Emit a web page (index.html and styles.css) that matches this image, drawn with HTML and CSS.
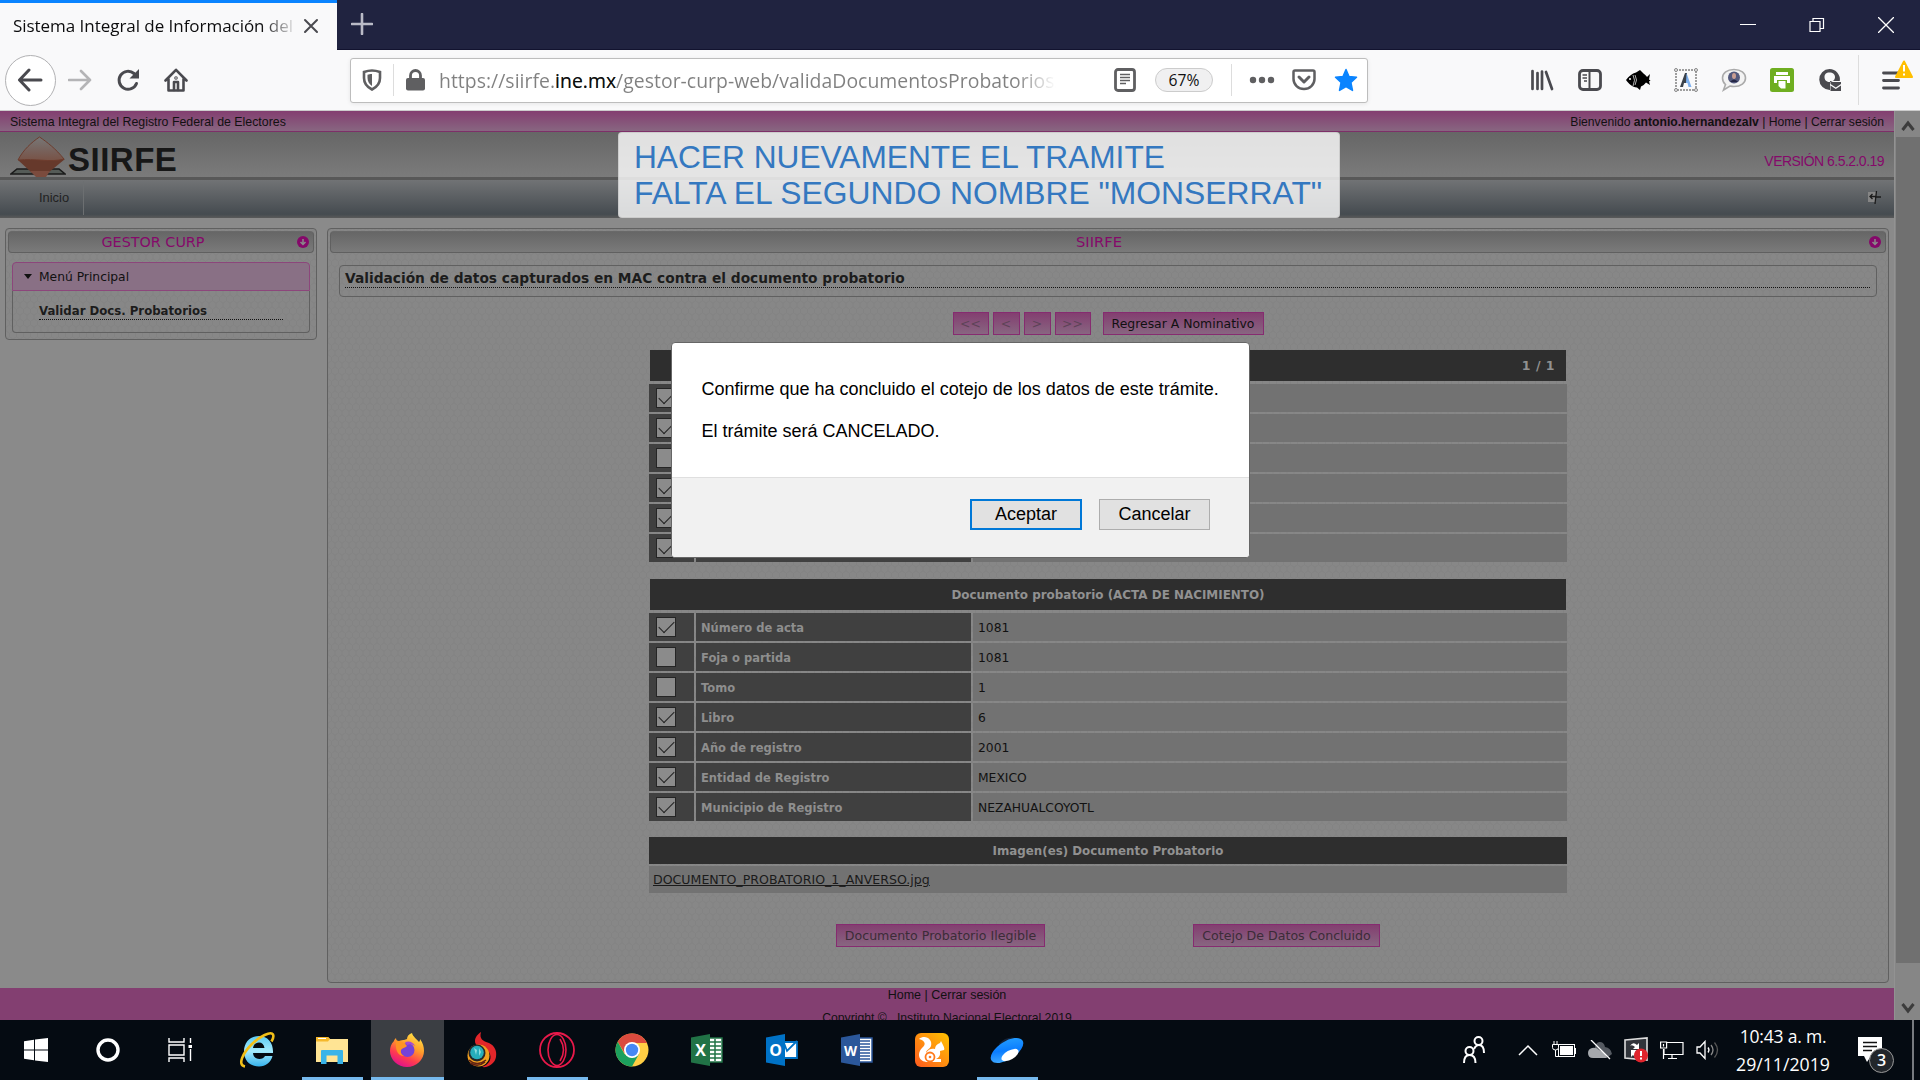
FILE: index.html
```html
<!DOCTYPE html>
<html lang="es">
<head>
<meta charset="utf-8">
<title>Sistema Integral de Información del Registro Federal de Electores</title>
<link rel="stylesheet" href="styles.css">
</head>
<body>
<header class="tabbar">
  <div class="tab"><span class="tab-title">Sistema Integral de Información del</span>
    <svg width="16" height="16" viewBox="0 0 16 16"><path d="M2 2l12 12M14 2L2 14" stroke="#4a4a4f" stroke-width="2" stroke-linecap="round"/></svg></div>
  <svg class="newtab" width="22" height="22" viewBox="0 0 22 22"><path d="M11 1v20M1 11h20" stroke="#b9bac6" stroke-width="2.6" stroke-linecap="round"/></svg>
  <div class="winbtns">
    <svg width="16" height="16" viewBox="0 0 16 16"><path d="M0 7.5h16" stroke="#fff"/></svg>
    <svg width="16" height="16" viewBox="0 0 16 16" fill="none" stroke="#fff" stroke-width="1.2"><path d="M1 4.5h10v10H1zM4 4.5v-3h10.500v10H11"/></svg>
    <svg width="16" height="16" viewBox="0 0 16 16"><path d="M0 0l16 16M16 0L0 16" stroke="#fff" stroke-width="1.3"/></svg>
  </div>
</header>

<nav class="toolbar">
  <div class="navbtns">
    <span class="back"><svg width="26" height="24" viewBox="0 0 26 24"><path d="M24 12H3M12 2L2.500 12 12 22" fill="none" stroke="#4a4a4f" stroke-width="3" stroke-linecap="round" stroke-linejoin="round"/></svg></span>
    <span class="slot"><svg width="24" height="22" viewBox="0 0 24 22"><path d="M1 11h21M13 2l9 9-9 9" fill="none" stroke="#b4b4b6" stroke-width="2.600" stroke-linecap="round" stroke-linejoin="round"/></svg></span>
    <span class="slot"><svg width="24" height="24" viewBox="0 0 24 24"><path d="M20.500 15.500A9 9 0 1 1 18 5.500" fill="none" stroke="#4a4a4f" stroke-width="3" stroke-linecap="round"/><path d="M23 1v9.500h-9.500z" fill="#4a4a4f"/></svg></span>
    <span class="slot"><svg width="24" height="24" viewBox="0 0 24 24" fill="none" stroke="#4a4a4f" stroke-width="2.600" stroke-linejoin="round" stroke-linecap="round"><path d="M1.500 12.500L12 1.800l10.500 10.700M4.500 11v11.500h15V11"/><path d="M10 22v-8h4v8"/><circle cx="12" cy="10" r=".5"/></svg></span>
  </div>
  <div class="urlbar">
    <svg class="shield" width="20" height="22" viewBox="0 0 20 22"><path d="M10 1.500c3 0 5.500.6 8 1.500v6c0 5-3 9-8 11.500C5 18 2 14 2 9V3c2.500-.9 5-1.500 8-1.500z" fill="none" stroke="#5f5f61" stroke-width="2.600"/><path d="M10 5c-2 0-3 .3-4.500.7V9c0 3.500 2 6.500 4.500 8z" fill="#5f5f61"/></svg>
    <i class="vsep"></i>
    <svg class="lock" width="19" height="22" viewBox="0 0 19 22"><rect x="0" y="9" width="19" height="12.500" rx="2" fill="#5f5f61"/><path d="M4.500 10V6.500a5 5 0 0 1 10 0V10" fill="none" stroke="#5f5f61" stroke-width="2.800"/></svg>
    <span class="url">https://siirfe.<b>ine.mx</b>/gestor-curp-web/validaDocumentosProbatorios/</span>
    <svg class="reader" width="22" height="24" viewBox="0 0 22 24"><rect x="1.500" y="1.500" width="19" height="21" rx="2.500" fill="none" stroke="#5f5f61" stroke-width="2.800"/><path d="M6 6.500h10M6 9.500h10M6 12.500h10M6 15.500h6" stroke="#5f5f61" stroke-width="1.400"/></svg>
    <span class="zoom">67%</span>
    <i class="vsep vsep2"></i>
    <svg class="dots" width="26" height="8" viewBox="0 0 26 8" fill="#5f5f61"><circle cx="4" cy="4" r="3.200"/><circle cx="13" cy="4" r="3.200"/><circle cx="22" cy="4" r="3.200"/></svg>
    <svg class="pocket" width="24" height="22" viewBox="0 0 24 22" fill="none" stroke="#5f5f61" stroke-linecap="round" stroke-linejoin="round"><path d="M3 1.500h18q1.500 0 1.500 1.500v7a10.500 10 0 0 1-21 0V3q0-1.500 1.500-1.500z" stroke-width="2.500"/><path d="M7 8l5 5 5-5" stroke-width="3"/></svg>
    <svg class="star" width="24" height="24" viewBox="0 0 24 24"><path d="M12 1.500l3 7 7.500.8-5.600 5.100 1.600 8L12 18.500l-6.500 3.900 1.600-8L1.500 9.300 9 8.500z" fill="#0a84ff" stroke="#0a84ff" stroke-width="1.500" stroke-linejoin="round"/></svg>
  </div>
  <div class="exts">
    <span class="slot"><svg width="24" height="22" viewBox="0 0 24 22" stroke="#4a4a4f" stroke-width="2.700" stroke-linecap="round"><path d="M2.500 2v18M7.500 4v16M12 2.500V20M16 3l6 17"/></svg></span>
    <span class="slot"><svg width="24" height="22" viewBox="0 0 24 22" fill="none" stroke="#4a4a4f"><rect x="1.500" y="1.500" width="21" height="19" rx="3.500" stroke-width="2.800"/><path d="M11.500 2v18" stroke-width="2"/><path d="M4.500 6H9M4.500 9H9M6 12h3" stroke-width="1.400"/></svg></span>
    <span class="slot"><svg width="26" height="20" viewBox="0 0 26 20"><path d="M1 10C4 6 7 3.500 11 2.500L15 0l4 4c1 .5 2 1.700 3 3l3-3-1 5.500 1.500 1-1.500 1L25 15l-4-2.500c-1.500 2-3 3-5 4L15 20l-3-2.500C7 17 4 14 1 10z" fill="#000"/><circle cx="5" cy="9" r="1" fill="#fff"/><path d="M8 5q3 5 0 11M10 5q3 5 0 10" fill="none" stroke="#ddd" stroke-width=".8"/></svg></span>
    <span class="slot"><svg width="24" height="24" viewBox="0 0 24 24"><rect x="2" y="2" width="20" height="20" fill="none" stroke="#808080" stroke-width="1.500" stroke-dasharray="2 1"/><g fill="#eee" stroke="#888"><circle cx="2" cy="2" r="1.500"/><circle cx="22" cy="2" r="1.500"/><circle cx="2" cy="22" r="1.500"/><circle cx="22" cy="22" r="1.500"/></g><path d="M6 19L11 5h2v10h-3l-1 4z" fill="#3a414a"/><path d="M12.500 5l5 14h-3l-1-4h-1.500z" fill="#7db0ee"/></svg></span>
    <span class="slot"><svg width="26" height="24" viewBox="0 0 26 24"><path d="M13 1.500c7 0 11.500 3.500 11.500 8.500S20 18.500 13 18.500q-2 0-4-.5L2.500 22l2-5.500Q1.500 14 1.500 10C1.500 5 6 1.500 13 1.500z" fill="#f3f3f3" stroke="#aaa" stroke-width="1.600"/><ellipse cx="13" cy="9.500" rx="6" ry="6" fill="#52587c"/><ellipse cx="13" cy="8" rx="2" ry="3" fill="#c89d92"/><path d="M9 14q4-5 8 0z" fill="#252746"/></svg></span>
    <span class="slot"><svg width="24" height="24" viewBox="0 0 24 24"><rect width="24" height="24" rx="2.500" fill="#6fae20"/><path d="M6 4h12v3H6zM4 8h16v7h-3v-3H7v3H4z" fill="#fff"/><path d="M8.500 13h7v7.500H11L8.500 18z" fill="#fff"/></svg></span>
    <span class="slot"><svg width="24" height="24" viewBox="0 0 24 24"><path fill-rule="evenodd" d="M11.500 1a10.500 10.500 0 0 1 10.300 12H12v9A10.500 10.500 0 0 1 11.500 1zM11.500 4.500c-3.500 0-5 2-5 4.500s1.500 5 5 5 5.500-2.500 5.500-5-2-4.500-5.500-4.500z" fill="#4a4a4f"/><path d="M12.500 14H23v2l-5.200 3.500L12.500 16zM12.500 17.500l5.300 3.500 5.200-3.500V23H12.500z" fill="#4a4a4f"/></svg></span>
    <i class="tsep"></i>
    <span class="menu"><svg width="32" height="32" viewBox="0 0 32 32"><path d="M2.500 13h16M2.500 20.500h15M2.500 28h15" stroke="#4a4a4f" stroke-width="2.800" stroke-linecap="round"/><path d="M23 1.500L31 17H15z" fill="#ffbf00" stroke="#ffbf00" stroke-width="2" stroke-linejoin="round"/><path d="M23 5v6.500M23 13.500v2" stroke="#fff" stroke-width="2"/></svg></span>
  </div>
</nav>

<main class="viewport">
  <div class="page">
    <div class="welcome"><span class="sysname">Sistema Integral del Registro Federal de Electores</span><span>Bienvenido <b>antonio.hernandezalv</b> | Home | Cerrar sesión</span></div>
    <div class="brand">
      <div class="logo">
        <svg width="56" height="42" viewBox="0 0 56 42"><defs><linearGradient id="kite" x1="0" y1="0" x2="0" y2="1"><stop offset="0" stop-color="#777"/><stop offset="1" stop-color="#785246"/></linearGradient></defs><path d="M7 33h42l6 5H1z" fill="#555b57" stroke="#1b1b1b" stroke-width="1.500"/><path d="M8 24l47-1-17 14H22z" fill="#66392b"/><path d="M29.500 1C37 6 46 13 54 23 40 27 25 22 8 24 13 14 22 6 29.500 1z" fill="url(#kite)" stroke="#6d3c2d"/><path d="M20 35h20l-4 6H26z" fill="#7b4b3d"/></svg>
        <span class="logo-text">SIIRFE</span>
      </div>
      <span class="version">VERSIÓN 6.5.2.0.19</span>
    </div>
    <div class="menubar"><span class="inicio">Inicio</span>
      <svg width="16" height="16" viewBox="0 0 16 16"><path d="M1 2h8v10H1z" fill="#858585"/><path d="M3 6.500h6M5.500 4L3 6.500 5.500 9M9.500 1L8 14M8 7h6" stroke="#1b1b1b" stroke-width="1.300" fill="none"/></svg></div>
    <div class="columns">
      <aside class="panel side">
        <div class="phead"><span class="ptitle">GESTOR CURP</span><svg width="12" height="12" viewBox="0 0 12 12"><circle cx="6" cy="6" r="6" fill="#85096a"/><path d="M6 3v5M3.500 6L6 8.500 8.500 6" stroke="#8a8a8a" stroke-width="1.500" fill="none"/></svg></div>
        <div class="accordion">
          <div class="acc-head"><svg width="8" height="5" viewBox="0 0 8 5"><path d="M0 0h8L4 5z" fill="#111"/></svg><span>Menú Principal</span></div>
          <div class="acc-body"><span>Validar Docs. Probatorios</span></div>
        </div>
      </aside>
      <section class="panel content">
        <div class="phead"><span class="ptitle main-title">SIIRFE</span><svg width="12" height="12" viewBox="0 0 12 12"><circle cx="6" cy="6" r="6" fill="#85096a"/><path d="M6 3v5M3.500 6L6 8.500 8.500 6" stroke="#8a8a8a" stroke-width="1.500" fill="none"/></svg></div>
        <div class="heading"><span>Validación de datos capturados en MAC contra el documento probatorio</span></div>
        <div class="pager"><span class="btn off w36">&lt;&lt;</span><span class="btn off w27">&lt;</span><span class="btn off w27">&gt;</span><span class="btn off w36">&gt;&gt;</span><span class="btn back-nom">Regresar A Nominativo</span></div>
        <div class="table first">
          <div class="thead right">1 / 1</div>
          <div class="row"><span class="ck"><i class="box on"></i></span><span class="lb"></span><span class="vl"></span></div>
          <div class="row"><span class="ck"><i class="box on"></i></span><span class="lb"></span><span class="vl"></span></div>
          <div class="row"><span class="ck"><i class="box"></i></span><span class="lb"></span><span class="vl"></span></div>
          <div class="row"><span class="ck"><i class="box on"></i></span><span class="lb"></span><span class="vl"></span></div>
          <div class="row"><span class="ck"><i class="box on"></i></span><span class="lb"></span><span class="vl"></span></div>
          <div class="row"><span class="ck"><i class="box on"></i></span><span class="lb"></span><span class="vl"></span></div>
        </div>
        <div class="table second">
          <div class="thead">Documento probatorio (ACTA DE NACIMIENTO)</div>
          <div class="row"><span class="ck"><i class="box on"></i></span><span class="lb">Número de acta</span><span class="vl">1081</span></div>
          <div class="row"><span class="ck"><i class="box"></i></span><span class="lb">Foja o partida</span><span class="vl">1081</span></div>
          <div class="row"><span class="ck"><i class="box"></i></span><span class="lb">Tomo</span><span class="vl">1</span></div>
          <div class="row"><span class="ck"><i class="box on"></i></span><span class="lb">Libro</span><span class="vl">6</span></div>
          <div class="row"><span class="ck"><i class="box on"></i></span><span class="lb">Año de registro</span><span class="vl">2001</span></div>
          <div class="row"><span class="ck"><i class="box on"></i></span><span class="lb">Entidad de Registro</span><span class="vl">MEXICO</span></div>
          <div class="row"><span class="ck"><i class="box on"></i></span><span class="lb">Municipio de Registro</span><span class="vl">NEZAHUALCOYOTL</span></div>
        </div>
        <div class="table third">
          <div class="thead images">Imagen(es) Documento Probatorio</div>
          <div class="file"><a>DOCUMENTO_PROBATORIO_1_ANVERSO.jpg</a></div>
        </div>
        <div class="actions"><span class="btn off wide">Documento Probatorio Ilegible</span><span class="btn off done">Cotejo De Datos Concluido</span></div>
      </section>
    </div>
    <footer class="foot"><div class="foot-links">Home | Cerrar sesión</div><div class="copy">Copyright © &nbsp; Instituto Nacional Electoral 2019</div></footer>
  </div>
  <div class="scroll">
    <svg width="14" height="12" viewBox="0 0 14 12"><path d="M1.500 10L7 3l5.500 7" fill="none" stroke="#3c3c3c" stroke-width="3"/></svg>
    <div class="thumb"></div>
    <svg class="down" width="14" height="12" viewBox="0 0 14 12"><path d="M1.500 2L7 9l5.500-7" fill="none" stroke="#3c3c3c" stroke-width="3"/></svg>
  </div>
</main>

<div class="note"><div class="n1">HACER NUEVAMENTE EL TRAMITE</div><div>FALTA EL SEGUNDO NOMBRE "MONSERRAT"</div></div>

<div class="dialog">
  <div class="msg"><p>Confirme que ha concluido el cotejo de los datos de este trámite.</p><p>El trámite será CANCELADO.</p></div>
  <div class="dfoot"><span class="dbtn primary">Aceptar</span><span class="dbtn">Cancelar</span></div>
</div>

<footer class="taskbar">
  <div class="sys">
    <span><svg width="24" height="24" viewBox="0 0 24 24" fill="#fff"><path d="M0 3.300l10-1.500v9.700H0zM11 1.600L24 0v11.500H11zM0 12.500h10v9.700L0 20.700zM11 12.500h13V24l-13-1.600z"/></svg></span>
    <span><svg width="24" height="24" viewBox="0 0 24 24"><circle cx="12" cy="12" r="10" fill="none" stroke="#fff" stroke-width="3.400"/></svg></span>
    <span><svg width="24" height="24" viewBox="0 0 24 24" fill="none" stroke="#fff" stroke-width="1.400"><path d="M1 0v4h15V0M1 24v-4h15v4M1 7h15v10H1zM22.500 0v5M22.500 11v12"/><path d="M20.500 7h4v3h-4z" fill="#fff" stroke="none"/></svg></span>
  </div>
  <div class="apps">
    <span class="app"><svg width="36" height="36" viewBox="0 0 36 36"><defs><linearGradient id="ie" x1="0" y1="0" x2="0" y2="1"><stop offset="0" stop-color="#5ccbf4"/><stop offset=".5" stop-color="#a5ebfd"/><stop offset="1" stop-color="#36b2ec"/></linearGradient></defs><path fill-rule="evenodd" d="M34 21H14c.3 4 3 6 6.500 6 2.500 0 4.500-1 5.500-3h7.500C32 30 27 34.500 20 34.500c-9 0-15-6-15-15S11 4 20 4s14.500 7 14 17zM14 16h11.500c-.4-3.500-2.500-5.500-5.500-5.500S14.500 12.500 14 16z" fill="url(#ie)"/><path d="M6 34.500C-2 33 4 21 12.500 12.500S32-1 34 2.500c1 2 0 4.500-1.500 7" fill="none" stroke="#f2bf18" stroke-width="2.600"/></svg></span>
    <span class="app open"><svg width="34" height="28" viewBox="0 0 34 28"><path d="M1 1h12l2 2h18v23H1z" fill="#ffe494"/><path d="M1 1h12l2 2-2 2.500H1z" fill="#f5b82b"/><path d="M3 2.500h8" stroke="#fff"/><path d="M6 15q0-1 1-1h20q1 0 1 1v13h-5.500v-8.500h-11V28H6z" fill="#39b4e8"/></svg></span>
    <span class="app open active"><svg width="36" height="36" viewBox="0 0 36 36"><defs><linearGradient id="ff" x1=".9" y1="0" x2=".4" y2="1"><stop offset="0" stop-color="#fff14a"/><stop offset=".45" stop-color="#ff9a2b"/><stop offset=".75" stop-color="#ff3c4f"/><stop offset="1" stop-color="#e31587"/></linearGradient></defs><path d="M23 1c1 4 5 6 7 9 1-1 1-2 1-3 3 4 4 8 4 12a17 16 0 0 1-34 0c0-4 1-7 4-10 0-1 1-2 2-3 0 2 1 3 3 3 2-1 4-1 5-1 1 0 2-1 3-1 0-3 2-5 5-6z" fill="url(#ff)"/><circle cx="18.500" cy="18" r="7" fill="#7542d8"/><path d="M7 9c6 0 9 2 11 5-2 2-5 2-6 4-1 3 1 5 3 6-6 0-9-6-8-15z" fill="#ff9424"/><path d="M16 10q7-2 10 4-4-3-8-1z" fill="#a24ad6"/></svg></span>
    <span class="app"><svg width="30" height="36" viewBox="0 0 30 36"><path d="M14 0c-2 7 2 9 8 11 6 3 8 8 7 14-1 6-7 11-14 10 6-2 10-7 8-13C21 15 8 17 8 9c0-4 3-7 6-9z" fill="#e3262a"/><circle cx="11.500" cy="23.500" r="11" fill="#f3a01e"/><path d="M2 28q8 7 17 0M3 31q8 5 15-1" stroke="#5f2113" stroke-width="1.500" fill="none"/><circle cx="10" cy="21" r="8.500" fill="#25272a"/><circle cx="10" cy="20.500" r="6.800" fill="#27aebb"/><path d="M7 16l3 2-1 5zM12 16l2 4-2 4z" fill="#8bdde0"/></svg></span>
    <span class="app open"><svg width="36" height="36" viewBox="0 0 36 36" fill="none" stroke="#e8194a"><circle cx="18" cy="18" r="17" stroke-width="1.800"/><ellipse cx="18" cy="18" rx="9" ry="15.500" stroke-width="1.600"/><path d="M21 7q7 11 0 22" stroke-width="1.600"/></svg></span>
    <span class="app"><svg width="34" height="34" viewBox="0 0 34 34"><circle cx="17" cy="17" r="16.500" fill="#ffce44"/><path d="M2.700 8.700A16.500 16.500 0 0 1 31.300 8.700L32 10H17L9.500 20z" fill="#db4b3e"/><path d="M2.700 8.700L9.500 21 17 25l-4 8A16.500 16.500 0 0 1 2.700 8.700zM17 25l7-4-7 12.500a16 16 0 0 1-5-.7z" fill="#1ca05d"/><circle cx="17" cy="17" r="8" fill="#fff"/><circle cx="17" cy="17" r="6.200" fill="#4688f4"/></svg></span>
    <span class="app"><svg width="32" height="32" viewBox="0 0 32 32"><path d="M17 4h14v24H17z" fill="#fff" stroke="#217346" stroke-width="1.500"/><path d="M19 8h11M19 12h11M19 16h11M19 20h11M19 24h11M24 5v22" stroke="#217346" stroke-width="1.500"/><path d="M0 3.500L19 0v32L0 28.500z" fill="#217346"/><text class="glyph" x="9.500" y="22">X</text></svg></span>
    <span class="app"><svg width="32" height="32" viewBox="0 0 32 32"><path d="M17 8h14v16H17z" fill="#fff" stroke="#0072c6" stroke-width="1.800"/><path d="M18 9l3 8 10-10" fill="none" stroke="#0072c6" stroke-width="1.800"/><path d="M0 3.500L19 0v32L0 28.500z" fill="#0072c6"/><text class="glyph" x="9.500" y="22">O</text></svg></span>
    <span class="app"><svg width="32" height="32" viewBox="0 0 32 32"><path d="M17 4h14v24H17z" fill="#fff" stroke="#2b579a" stroke-width="1.500"/><path d="M19 7h10M19 10h10M19 13h10M19 16h10M19 19h10M19 22h10M19 25h10" stroke="#2b579a" stroke-width="1.500"/><path d="M0 3.500L19 0v32L0 28.500z" fill="#2b579a"/><text class="glyph word" x="9.500" y="22">W</text></svg></span>
    <span class="app"><svg width="34" height="34" viewBox="0 0 34 34"><defs><linearGradient id="uc" x1="1" y1="0" x2="0" y2="1"><stop offset="0" stop-color="#ffc400"/><stop offset="1" stop-color="#ff5a1e"/></linearGradient></defs><rect width="34" height="34" rx="6" fill="url(#uc)"/><path d="M4 6c6-5 14 0 12 7-1 3-5 4-5 7 2-4 6-5 9-4 0-3 2-5 5-6l1-2 2 4q2 4 1 5l-4 1q1 6-4 8h5v3H13C3 29 2 20 7 15c4-3 4-7-3-9z" fill="#fff"/><circle cx="15" cy="24" r="4.500" fill="none" stroke="#ff7a1c" stroke-width="1.800"/><circle cx="15" cy="24" r="1.300" fill="#ff7a1c"/></svg></span>
    <span class="app open"><svg width="36" height="36" viewBox="0 0 36 36"><defs><linearGradient id="disk" x1="0" y1="1" x2="1" y2="0"><stop offset="0" stop-color="#51b8ff"/><stop offset=".5" stop-color="#0b7dff"/><stop offset="1" stop-color="#2aa7ff"/></linearGradient></defs><path d="M10 12q7-8 17-6L14 16z" fill="#142238"/><ellipse cx="18" cy="18.500" rx="18.500" ry="9" transform="rotate(-33 18 18.500)" fill="url(#disk)"/><ellipse cx="21" cy="23" rx="9.500" ry="4.500" transform="rotate(-30 21 23)" fill="#fff"/></svg></span>
  </div>
  <div class="tray">
    <svg class="people" width="24" height="28" viewBox="0 0 24 28" fill="none" stroke="#fff" stroke-width="2"><circle cx="7.500" cy="15" r="4"/><path d="M2 27q0-8 5.500-8 6 0 6 8"/><circle cx="16.500" cy="5" r="4"/><path d="M12 13q2-4 5-4 5 0 5 8"/></svg>
    <span class="ti"><svg width="20" height="12" viewBox="0 0 20 12"><path d="M1 11l9-9 9 9" fill="none" stroke="#fff" stroke-width="1.500"/></svg></span>
    <span class="ti"><svg width="24" height="18" viewBox="0 0 24 18"><rect x="6.500" y="3.500" width="16" height="12" fill="none" stroke="#fff"/><path d="M8 5h13v9H8zM22.500 7h1.500v6h-1.500z" fill="#fff"/><path d="M.5 3.500h6v3q0 2.500-3 2.500t-3-2.500z" fill="#050b12" stroke="#fff"/><path d="M2 0v3.500M5 0v3.500M3.500 9v6.500h4" stroke="#fff" fill="none"/></svg></span>
    <span class="ti"><svg width="24" height="20" viewBox="0 0 24 20"><path d="M7 9a5 6 0 0 1 10-2q6 1 7 7l-4 3H7z" fill="#555a61"/><path d="M0 13q0-4 4-5 4-1 7 2 6 2 8 8H5q-5 0-5-5z" fill="#a6a9ad"/><path d="M3 0l19 19" stroke="#fff" stroke-width="1.300"/></svg></span>
    <span class="ti"><svg width="24" height="26" viewBox="0 0 24 26"><path d="M1 3l22-2v22L1 21z" fill="#30343a" stroke="#ddd" stroke-width="1.600"/><path d="M6 9q3-5 7-1l2-2v6H9l2-2q-3-3-5-1zM7 13h6l-2 2q2 2 4 0v3q-4 3-6 0l-2 2z" fill="#fff"/><circle cx="17" cy="18.500" r="7" fill="#e0242c"/><path d="M17 14v5M17 20.500v2" stroke="#fff" stroke-width="2"/></svg></span>
    <span class="ti"><svg width="24" height="20" viewBox="0 0 24 20" fill="none" stroke="#fff" stroke-width="1.200"><path d="M7 2.500h16v12H4V9M12 15v3M8 18.500h9M.600 2h6v6h-6zM3.500 4v2.500M3.500 9v10"/></svg></span>
    <span class="ti"><svg width="24" height="20" viewBox="0 0 24 20" fill="none" stroke="#fff" stroke-width="1.300"><path d="M1 7h3l5-5.500v17L4 13H1z"/><path d="M12 7.500q2 2.500 0 5"/><path d="M15 5q4 5 0 10" stroke="#888"/><path d="M18.500 2.500q6 7.500 0 15" stroke="#555"/></svg></span>
    <div class="clock"><div class="time">10:43 a. m.</div><div class="date">29/11/2019</div></div>
    <div class="notif"><svg width="26" height="28" viewBox="0 0 26 28"><path d="M0 1h24v19H13l-4 6-3-6H0z" fill="#fff"/><path d="M5 6.500h14M5 10.500h14M5 14.500h9" stroke="#111" stroke-width="1.300"/></svg><b>3</b></div>
    <i class="peek"></i>
  </div>
</footer>
</body>
</html>
```
FILE: styles.css
```css
*{box-sizing:border-box}
body{margin:0;width:1920px;height:1080px;overflow:hidden;position:relative;display:flex;flex-direction:column;font-family:"Liberation Sans",Arial,sans-serif;background:#8a8a8a;color:#111}
svg{display:block;flex:none}
span,div,b{white-space:nowrap}

.tabbar{height:50px;flex:none;display:flex;align-items:center;background:#202340;border-bottom:1px solid #12132f}
.tab{width:337px;height:50px;background:#f9f9fa;border-top:3px solid #0a84ff;display:flex;align-items:center;padding:0 18px 1px 13px;justify-content:space-between;align-self:flex-start}
.tab-title{font:17px/24px "Open Sans",sans-serif;letter-spacing:-.04px;width:282px;overflow:hidden;background:linear-gradient(90deg,#0c0c0d 88%,#0c0c0d00 101%);-webkit-background-clip:text;background-clip:text;color:transparent}
.newtab{margin-left:14px;margin-top:-1px}
.winbtns{margin-left:auto;display:flex;gap:53px;padding-right:26px}

.toolbar{height:61px;flex:none;background:#f9f9fa;border-bottom:1px solid #ccc;display:flex;align-items:center;padding-left:5px}
.navbtns{display:flex;align-items:center;width:345px;height:58px}
.back{width:51px;height:51px;border:1px solid #b1b1b3;border-radius:50%;background:#fff;display:flex;align-items:center;justify-content:center}
.back svg{margin-left:-2px}
.slot{width:48px;display:flex;justify-content:center;flex:none}
.urlbar{width:1018px;height:45px;background:#fff;border:1px solid #bdbdbd;border-radius:3px;display:flex;align-items:center;box-shadow:0 1px 4px rgba(0,0,0,.08)}
.shield{margin-left:11px}
.vsep{width:1px;height:32px;background:#ddd;margin-left:11px}
.lock{margin-left:12px}
.url{font:19.400px/28px "Open Sans",sans-serif;letter-spacing:.03px;margin-left:14px;width:620px;overflow:hidden;margin-top:1px;background:linear-gradient(90deg,#808080 93%,#80808000 99.500%);-webkit-background-clip:text;background-clip:text;color:transparent}
.url b{font-weight:400;color:#0c0c0d}
.reader{margin-left:55px}
.zoom{font:15.700px/23px "Open Sans",sans-serif;width:58px;height:24px;border:1px solid #ccc;border-radius:12px;background:#f0f0f1;text-align:center;margin-left:19px}
.vsep2{margin-left:18px}
.dots{margin-left:17px}
.pocket{margin-left:17px}
.star{margin-left:18px}
.exts{display:flex;align-items:center;margin-left:150px}
.tsep{width:1px;height:50px;background:#ddd;margin-left:4px}
.menu{margin-left:22px;margin-top:-9px}

.viewport{height:909px;flex:none;display:flex;overflow:hidden}
.page{width:1894px;display:flex;flex-direction:column;flex:none}
.welcome{height:21px;flex:none;display:flex;justify-content:space-between;padding:1px 10px 0;background:linear-gradient(#833e70,#886681);border-bottom:1px solid #7d2f68;font-size:12.160px;line-height:21px}
.sysname{font-size:12.350px}
.brand{height:48px;flex:none;display:flex;justify-content:space-between;background:linear-gradient(#666,#7b7b7b);border-bottom:3px solid #585858;padding:0 10px}
.logo{display:flex;padding-top:4px;align-items:flex-start}
.logo-text{font:bold 33px/38px "Liberation Sans",Arial,sans-serif;letter-spacing:.5px;margin:5px 0 0 2px;color:#171717}
.version{font-size:14px;letter-spacing:-.53px;line-height:20px;margin-top:19px;color:#85096a}
.menubar{height:38px;flex:none;background:linear-gradient(#717375,#454b50 90%,#5a5a5a);display:flex;align-items:center;justify-content:space-between;padding:0 11px 2px 0}
.inicio{font-size:12.900px;width:84px;padding-left:39px;line-height:34px;border-right:1px solid #6c6f71;color:#222}
.columns{display:flex;gap:10px;padding:10px 5px 5px;height:770px;flex:none;align-items:flex-start}
.panel{border:1px solid #606060;border-radius:4px;background:#878787 url("data:image/svg+xml,%3Csvg xmlns='http://www.w3.org/2000/svg' width='7' height='12'%3E%3Cpath d='M0 2L3.500 0 7 2M0 2V6L3.500 8 7 6V2M3.500 8V12' fill='none' stroke='%23818181' stroke-width='.7'/%3E%3C/svg%3E");padding:2px;font-family:"DejaVu Sans",Verdana,sans-serif}
.side{width:312px;height:112px}
.content{width:1562px;height:755px;display:flex;flex-direction:column}
.phead{height:22px;flex:none;border:1px solid #606060;border-top-color:#696969;border-radius:4px;background:linear-gradient(#666,#7a7a7a);display:flex;align-items:center;color:#85096a;font-size:14.350px;line-height:20px;padding-right:4px}
.ptitle{flex:1;text-align:center}
.main-title{font-size:14.700px;margin-left:-2px}
.accordion{margin:9px 4px 0}
.acc-head{height:29px;border:1px solid #8c467b;border-radius:4px 4px 0 0;background:#897085;display:flex;align-items:center;gap:7px;padding-left:11px;font-size:12.300px}
.acc-body{height:42px;border:1px solid #606060;border-top:0;border-radius:0 0 4px 4px;padding:13px 26px 0 26px}
.acc-body span{display:block;border-bottom:1px dotted #111;font:bold 11.720px/15px "DejaVu Sans",Verdana,sans-serif;color:#1c1c1c}
.heading{height:32px;flex:none;margin:12px 9px 0;border:1px solid #606060;border-radius:4px;padding:4px 6px 0 5px}
.heading span{display:block;border-bottom:1px dotted #111;font:bold 13.780px/17px "DejaVu Sans",Verdana,sans-serif;color:#1c1c1c}
.pager{display:flex;justify-content:center;gap:4px;margin-top:15px;height:23px;flex:none}
.btn{height:23px;border:1px solid #862b70;background:linear-gradient(#833e70,#886681);font-size:12.430px;line-height:21px;text-align:center}
.off{color:#3c2c38}
.w36{width:36px}.w27{width:27px}
.pager .off{color:#5d4357}
.back-nom{width:161px;margin-left:8px}
.table{width:918px;align-self:center;display:flex;flex-direction:column;gap:2px;flex:none}
.first{margin-top:15px}
.second{margin-top:17px}
.third{margin-top:16px}
.thead{height:31px;margin:0 1px 1px;background:#2e2e2e;color:#919191;font-weight:bold;font-size:11.940px;line-height:32px;text-align:center}
.thead.right{text-align:right;padding-right:11px;font-size:12.500px;letter-spacing:.5px;line-height:31px}
.thead.images{height:27px;margin:0;line-height:28px;font-size:11.850px}
.row{height:28px;display:grid;grid-template-columns:45px 275px 594px;gap:2px;line-height:30px}
.ck,.lb,.vl{height:28px}
.ck,.lb{background:#404040}
.ck{padding:4px 7px}
.lb{color:#8e8e8e;font-weight:bold;font-size:11.500px;padding-left:5px}
.vl{background:#727272;font-size:12.300px;padding-left:5px}
.box{display:block;width:20px;height:20px;background:#8b8b8b;border:1px solid #252525;overflow:hidden}
.on::after{content:"";display:block;width:14px;height:7px;margin:4px 0 0 2px;border:solid #222;border-width:0 0 1.500px 1.500px;transform:translateY(-1px) rotate(-45deg)}
.file{height:27px;background:#727272;font-size:12.590px;line-height:28px;padding-left:4px;color:#1b1b1b}
.file a{text-decoration:underline}
.actions{display:flex;justify-content:center;gap:148px;margin-top:31px;flex:none}
.actions .btn{font-size:12.600px}
.wide{width:209px}.done{width:187px}
.foot{height:32px;flex:none;background:#833f71;text-align:center;overflow:hidden}
.foot-links{font-size:12.500px;line-height:14px}
.copy{font-size:12.200px;line-height:14px;margin-top:9px}
.scroll{width:26px;background:#868686;border-left:1px solid #929292;display:flex;flex-direction:column;align-items:center}
.scroll svg{margin-top:9px}
.thumb{width:24px;height:826px;margin-top:5px;background:#707070}
.scroll .down{margin-top:39px}

.note{position:absolute;left:618px;top:132px;width:722px;height:86px;border-radius:4px;background:rgba(255,255,255,.8);border:1px solid rgba(190,190,190,.6);color:#3478c0;font-size:31.840px;line-height:36px;padding:6px 0 0 15px}
.n1{font-size:31.680px}
.dialog{position:absolute;left:671px;top:342px;width:579px;height:216px;border:1px solid #666;border-radius:4px;background:#fff;overflow:hidden;color:#000;font-size:18px}
.msg{height:134px;padding:35px 28px 0 29.500px}
.msg p{margin:0 0 20px;line-height:22px}
.dfoot{height:80px;background:#f1f1f1;border-top:1px solid #dfdfdf;display:flex;justify-content:flex-end;gap:17px;padding:21px 39px 0 0}
.dbtn{width:111px;height:31px;border:1px solid #adadad;background:#e1e1e1;text-align:center;line-height:29px}
.primary{width:112px;border:2px solid #0078d7;line-height:27px}

.taskbar{height:60px;flex:none;background:#050b12;display:flex;color:#fff}
.sys{display:flex;width:220px;flex:none}
.sys span{width:72px;display:flex;align-items:center;justify-content:center}
.apps{display:flex;flex:none}
.app{width:73px;margin:0 1px;display:flex;align-items:center;justify-content:center;position:relative;border-bottom:3px solid transparent;border-top:3px solid transparent}
.app svg{margin-left:-2px}
.open::after{content:"";position:absolute;left:6px;right:6px;bottom:-3px;height:3px;background:#76b9ed}
.active{background:#3b3e43}
.active::after{left:0;right:0}
.glyph{font:bold 16px "Open Sans",sans-serif;fill:#fff;text-anchor:middle}
.word{font-size:13.500px}
.tray{margin-left:auto;display:flex;align-items:center}
.people{margin-right:24px}
.ti{width:36px;display:flex;justify-content:center}
.clock{width:110px;text-align:center;font-family:"Open Sans",sans-serif;margin-left:2px}
.time{font-size:17.500px;letter-spacing:-.2px;line-height:28px}
.date{font-size:17.700px;line-height:28px}
.notif{position:relative;width:58px;padding-left:20px;height:32px;margin-top:4px}
.notif b{position:absolute;left:31px;top:12px;width:25px;height:25px;border:1px solid #999;border-radius:50%;background:#22262b;font:600 16px/22px "Open Sans",sans-serif;text-align:center}
.peek{width:2px;height:60px;background:#777b80;margin:0 6px 0 16px}
```
